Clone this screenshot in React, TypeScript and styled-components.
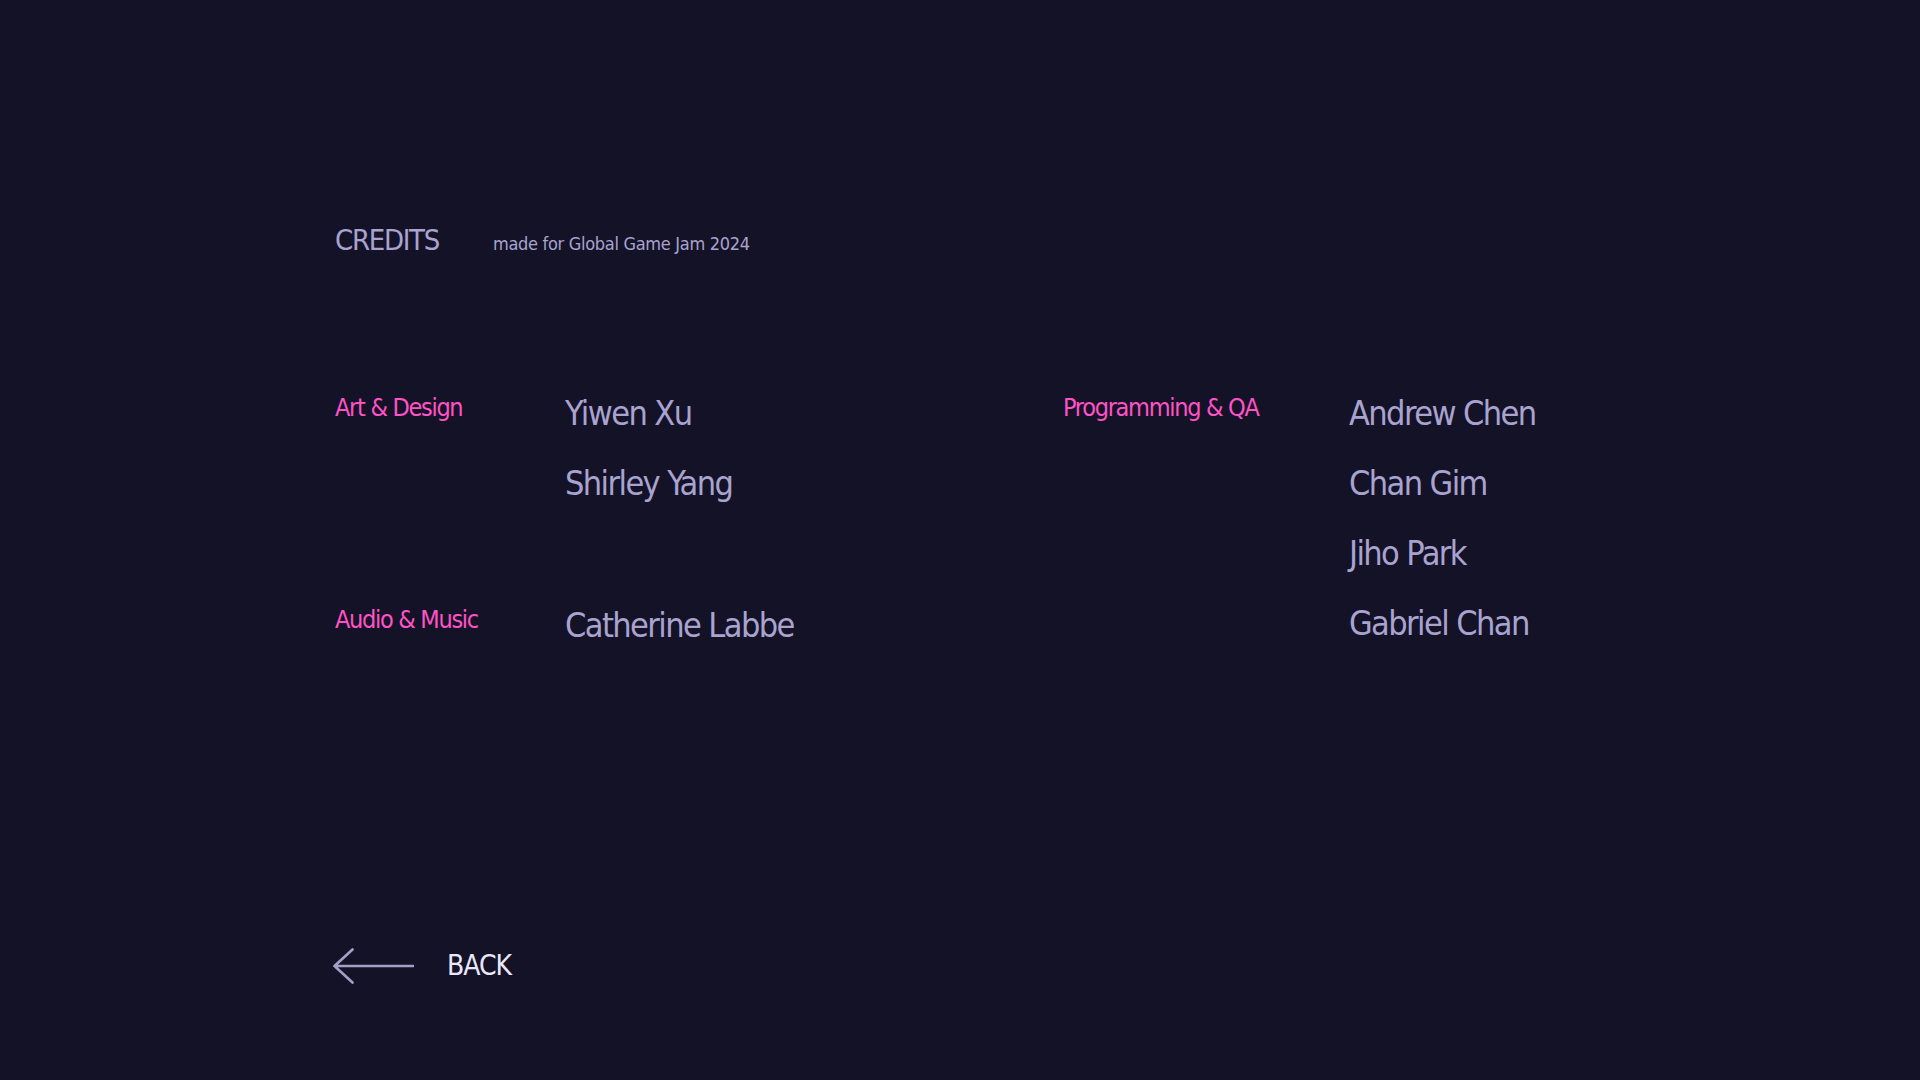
import React from "react";
import styled, { createGlobalStyle } from "styled-components";

const GlobalStyle = createGlobalStyle`
  html, body {
    margin: 0;
    padding: 0;
    background: #141227;
  }
  body {
    font-family: "DejaVu Sans Condensed", "Liberation Sans", sans-serif;
  }
`;

const Page = styled.main`
  width: 1920px;
  height: 1080px;
  box-sizing: border-box;
  padding: 225px 0 0 335px;
  background: #141227;
  display: flex;
  flex-direction: column;
`;

const Header = styled.header`
  display: flex;
  align-items: baseline;
`;

const Title = styled.h1`
  margin: 0;
  width: 158px;
  font-size: 29px;
  line-height: 31px;
  letter-spacing: -1.3px;
  font-weight: 400;
  color: #a9a3cf;
`;

const Subtitle = styled.span`
  font-size: 18px;
  letter-spacing: -0.3px;
  color: #a9a3cf;
`;

const Columns = styled.div`
  margin-top: 122px;
  display: grid;
  grid-template-columns: 728px auto;
  align-items: start;
`;

const Stack = styled.div`
  display: flex;
  flex-direction: column;
  gap: 72px;
`;

const Section = styled.section<{ $labelWidth: number }>`
  display: grid;
  grid-template-columns: ${(p) => p.$labelWidth}px auto;
  align-items: start;
`;

const Role = styled.h2`
  margin: 0;
  font-size: 25px;
  line-height: 59px;
  letter-spacing: -1.3px;
  font-weight: 400;
  color: #ff52c6;
`;

const Names = styled.ul`
  margin: 0;
  padding: 0;
  list-style: none;
`;

const Name = styled.li`
  font-size: 34px;
  line-height: 70px;
  letter-spacing: -1.6px;
  color: #a9a3cf;
`;

const BackButton = styled.button`
  margin-top: 288px;
  margin-left: -2px;
  align-self: flex-start;
  display: flex;
  align-items: center;
  gap: 33px;
  padding: 0;
  border: none;
  background: none;
  cursor: pointer;
  font-family: inherit;
  font-size: 28px;
  line-height: 28px;
  letter-spacing: -1px;
  color: #ebe7fa;
`;

const ArrowIcon = () => (
  <svg width="81" height="36" viewBox="0 0 81 36" fill="none">
    <path
      d="M80 18 H1.5 M19.5 1.5 L1.5 18 L19.5 34.5"
      stroke="#a59fc8"
      strokeWidth="2.6"
      strokeLinecap="round"
      strokeLinejoin="round"
    />
  </svg>
);

type Credit = { role: string; names: string[] };

const left: Credit[] = [
  { role: "Art & Design", names: ["Yiwen Xu", "Shirley Yang"] },
  { role: "Audio & Music", names: ["Catherine Labbe"] },
];

const right: Credit = {
  role: "Programming & QA",
  names: ["Andrew Chen", "Chan Gim", "Jiho Park", "Gabriel Chan"],
};

const CreditSection = ({ credit, labelWidth }: { credit: Credit; labelWidth: number }) => (
  <Section $labelWidth={labelWidth}>
    <Role>{credit.role}</Role>
    <Names>
      {credit.names.map((n) => (
        <Name key={n}>{n}</Name>
      ))}
    </Names>
  </Section>
);

export default function App() {
  return (
    <>
      <GlobalStyle />
      <Page>
        <Header>
          <Title>CREDITS</Title>
          <Subtitle>made for Global Game Jam 2024</Subtitle>
        </Header>
        <Columns>
          <Stack>
            {left.map((c) => (
              <CreditSection key={c.role} credit={c} labelWidth={230} />
            ))}
          </Stack>
          <CreditSection credit={right} labelWidth={286} />
        </Columns>
        <BackButton>
          <ArrowIcon />
          BACK
        </BackButton>
      </Page>
    </>
  );
}
